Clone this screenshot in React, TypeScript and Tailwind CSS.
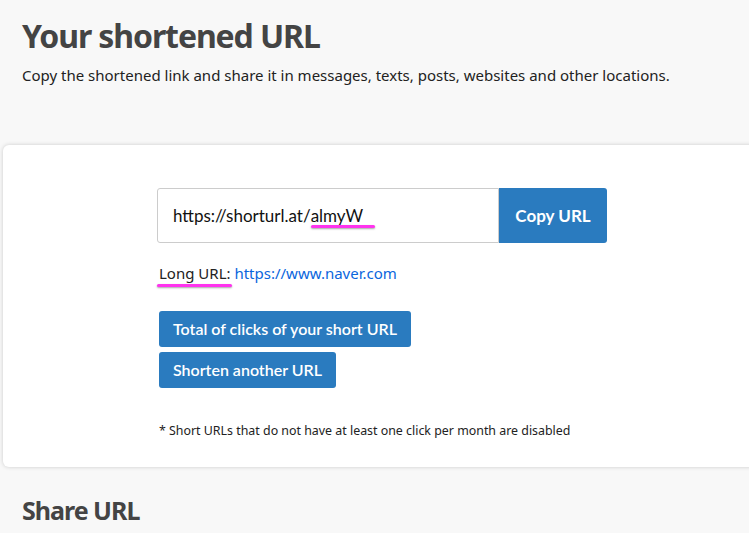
import React from "react";

export default function App() {
  const sans = { fontFamily: '"Noto Sans", sans-serif' };
  return (
    <div className="min-h-[533px] w-[749px] overflow-hidden bg-[#f8f8f8] text-[#222]" style={sans}>
      <div className="px-[22px] pt-[14px]">
        <h1 className="text-[32px] font-bold leading-[44px] tracking-[-1.1px] text-[#444]">Your shortened URL</h1>
        <p className="mt-[7px] text-[15px] leading-[20px] text-[#222]">
          Copy the shortened link and share it in messages, texts, posts, websites and other locations.
        </p>
      </div>
      <div className="ml-[3px] mt-[60px] w-[760px] rounded-[6px] bg-white pb-[27px] pl-[154px] pt-[43px] shadow-[0_0_4px_rgba(0,0,0,0.18)]">
        <div className="flex h-[55px] w-[450px]" style={{ fontFamily: 'Lato, sans-serif' }}>
          <div className="flex flex-1 items-center rounded-l-[3px] border border-[#ccc] pl-[15px] text-[17px] text-[#111]">
            <span>https://shorturl.at/</span>
            <span className="relative">
              almyW
              <span className="absolute left-0 right-[-12px] top-[22px] h-[3px] rounded bg-[#ff33ee] shadow-[0_1px_2px_rgba(0,0,0,0.35)]" />
            </span>
          </div>
          <button className="w-[108px] rounded-r-[3px] bg-[#2a7bbf] text-[17px] font-bold text-white">Copy URL</button>
        </div>
        <div className="mt-[20px] pl-[2px] text-[15px] leading-[20px]">
          <span className="relative">
            Long URL:
            <span className="absolute left-[-2px] right-[-1px] top-[21px] h-[3px] rounded bg-[#ff33ee] shadow-[0_1px_2px_rgba(0,0,0,0.35)]" />
          </span>{" "}
          <span className="text-[#0a66dd]">https://www.naver.com</span>
        </div>
        <div className="mt-[28px] flex flex-col items-start gap-[5px] pl-[2px]" style={{ fontFamily: 'Lato, sans-serif' }}>
          <button className="h-[36px] rounded-[3px] bg-[#2a7bbf] px-[14px] text-[16px] font-semibold text-white">Total of clicks of your short URL</button>
          <button className="h-[36px] rounded-[3px] bg-[#2a7bbf] px-[14px] text-[16px] font-semibold text-white">Shorten another URL</button>
        </div>
        <p className="mt-[34px] pl-[2px] text-[12.4px] leading-[18px] text-[#222]">
          * Short URLs that do not have at least one click per month are disabled
        </p>
      </div>
      <h2 className="px-[22px] pt-[27px] text-[25px] font-bold leading-[32px] tracking-[-1px] text-[#444]">Share URL</h2>
    </div>
  );
}
